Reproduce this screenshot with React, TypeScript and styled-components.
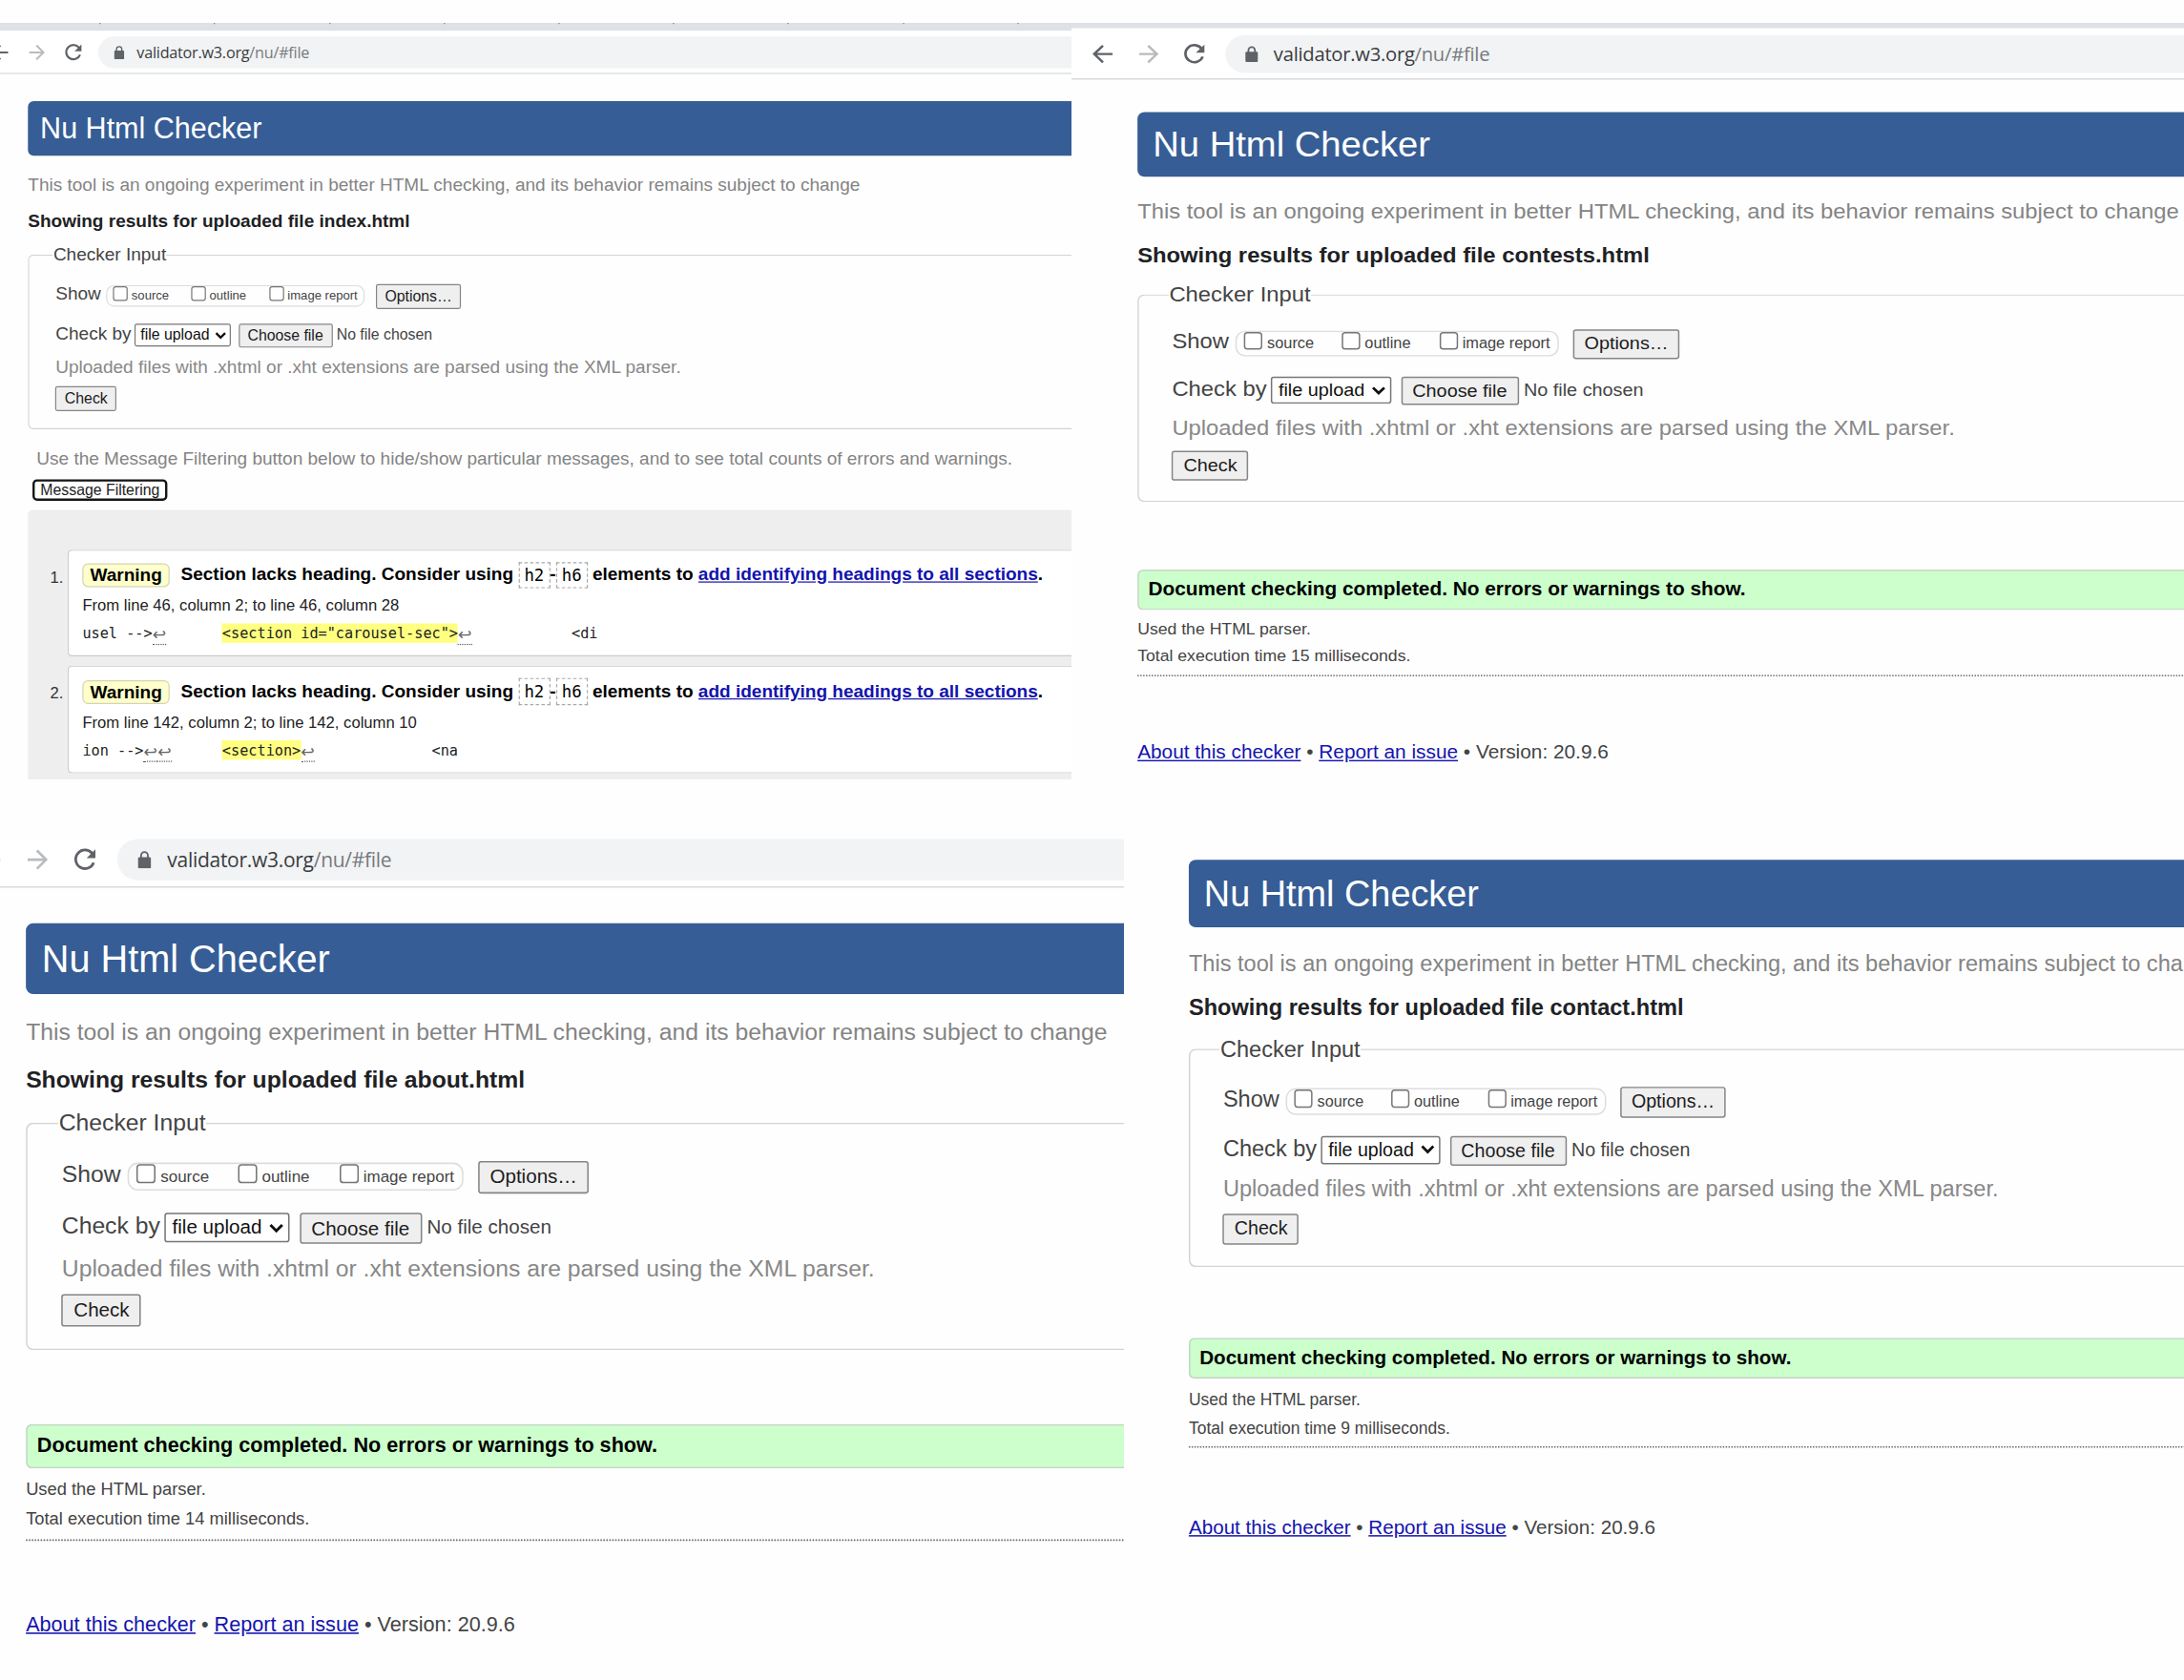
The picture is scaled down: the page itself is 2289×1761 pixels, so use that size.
import React from 'react';
import styled, { createGlobalStyle } from 'styled-components';

const sans = `'Liberation Sans', Arial, sans-serif`;
const mono = `'DejaVu Sans Mono', 'Liberation Mono', monospace`;

const GlobalStyle = createGlobalStyle`
  *, *::before, *::after { box-sizing: border-box; }
  body { margin: 0; background: #fff; font-family: ${sans}; color: #333; }
  p, h1, h2, ol { margin: 0; }
`;

const Page = styled.main`
  display: flex;
  flex-direction: column;
  width: 2289px;
  height: 1761px;
  padding-top: 24px;
  overflow: hidden;
  background: #fefefe;
`;

const PaneRow = styled.div<{ $height: number; $gap?: number }>`
  display: flex;
  flex: none;
  height: ${(p) => p.$height}px;
  margin-bottom: ${(p) => p.$gap ?? 0}px;
`;

const Pane = styled.section<{ $width: number }>`
  flex: none;
  width: ${(p) => p.$width}px;
  height: 100%;
  overflow: hidden;
`;

const Stage = styled.div<{ $x: number; $y: number; $sx: number; $sy: number }>`
  width: 960px;
  transform-origin: 0 0;
  transform: translate(${(p) => p.$x}px, ${(p) => p.$y}px) scale(${(p) => p.$sx}, ${(p) => p.$sy});
  font-size: 16px;
  line-height: 20px;
  white-space: nowrap;
`;

const TabStrip = styled.div`
  display: flex;
  gap: 100.2px;
  height: 7px;
  margin-left: -12px;
  padding-left: 110.2px;
  background: #dee1e6;
`;

const TabMark = styled.span`
  width: 1px;
  height: 1px;
  background: #777b80;
`;

const Toolbar = styled.div`
  display: flex;
  align-items: flex-start;
  height: 38px;
  margin-left: -12px;
  padding: 4.7px 0 0 14px;
  border-bottom: 1px solid #d6d8da;
  background: #fff;
`;

const NavIcon = styled.svg<{ $gap: number }>`
  flex: none;
  display: block;
  width: 16px;
  height: 16px;
  margin: 6.5px ${(p) => p.$gap}px 0 0;
`;

const AddressBar = styled.div`
  display: flex;
  flex: 1;
  height: 28px;
  padding-left: 13.6px;
  border-radius: 14px 0 0 14px;
  background: #f1f3f4;
`;

const LockIcon = styled.svg`
  flex: none;
  width: 9px;
  height: 12px;
  margin: 8.2px 11.4px 0 0;
`;

const Url = styled.span`
  color: #3a3c3f;
  font: 13.6px/28.6px 'Open Sans', 'Noto Sans', sans-serif;
  letter-spacing: -0.18px;
`;

const UrlPath = styled.span`
  color: #777a7e;
`;

const Content = styled.div<{ $top: number }>`
  padding: ${(p) => p.$top}px 0 0 35px;
`;

const Banner = styled.h1`
  height: 48px;
  padding-left: 10.8px;
  border-radius: 5px 0 0 5px;
  background: #365d95;
  color: #fff;
  font-size: 25.7px;
  font-weight: 400;
  line-height: 48.6px;
`;

const Intro = styled.p`
  margin-top: 16.1px;
  color: #848484;
`;

const ResultTitle = styled.h2`
  margin-top: 11.6px;
  color: #202124;
  font-size: 16px;
  line-height: 20px;
`;

const Fieldset = styled.fieldset`
  margin: 9.5px 0 0;
  padding: 0 0 14.7px 21.4px;
  border: 1px solid #d3d3d3;
  border-right: 0;
  border-radius: 5px 0 0 5px;
`;

const Legend = styled.legend`
  padding: 0;
  color: #444;
`;

const FormBody = styled.div`
  padding: 15.7px 0 0 2px;
`;

const FormRow = styled.div`
  display: flex;
  align-items: flex-start;
  color: #444;
`;

const ShowLabel = styled.span`
  width: 44.8px;
  margin-top: -0.4px;
`;

const CheckByLabel = styled.span`
  width: 69.8px;
  margin-top: -0.4px;
`;

const OptionPill = styled.div`
  display: flex;
  width: 228.3px;
  height: 19px;
  margin: 1.5px 9.4px 0 0;
  padding-left: 5px;
  border: 1px solid #ddd;
  border-radius: 7px;
`;

const OptionItem = styled.label<{ $width: number }>`
  display: flex;
  gap: 3.2px;
  width: ${(p) => p.$width}px;
  font-size: 11px;
  line-height: 17.4px;
`;

const CheckBox = styled.input.attrs({ type: 'checkbox' })`
  appearance: none;
  flex: none;
  width: 13px;
  height: 13px;
  margin: -0.2px 0 0;
  border: 1px solid #767676;
  border-radius: 2.5px;
  background: #fff;
`;

const Button = styled.button<{ $height?: number }>`
  display: block;
  height: ${(p) => p.$height ?? 22}px;
  margin: 0;
  padding: 0 7.1px 1px;
  border: 1px solid #858585;
  border-radius: 2px;
  background: #efefef;
  color: #1c1c1c;
  font: 13.333px/19px ${sans};
`;

const UploadRow = styled(FormRow)`
  margin-top: 13px;
`;

const SelectBox = styled.div`
  display: flex;
  align-items: center;
  gap: 4.5px;
  width: 84.4px;
  height: 19.4px;
  margin: 0.6px 7.1px 0 0;
  padding-left: 4.2px;
  border: 1px solid #767676;
  border-radius: 2px;
  background: #fff;
  color: #111;
  font-size: 13.333px;
`;

const Chevron = styled.svg`
  flex: none;
  width: 10px;
  height: 7px;
`;

const FileName = styled.span`
  margin: 0.4px 0 0 3.7px;
  font-size: 13.333px;
`;

const UploadHint = styled.p`
  margin: 7.2px 0 7.3px;
  color: #888;
`;

const FilterHint = styled.p`
  margin: 15.7px 0 7.8px 7.6px;
  color: #848484;
`;

const FilterButton = styled.button`
  display: block;
  height: 19.4px;
  margin: 0 0 8.4px 4px;
  padding: 0 5px;
  border: 2px solid #151515;
  border-radius: 4px;
  background: #fff;
  color: #1c1c1c;
  font: 13.333px/15px ${sans};
`;

const Results = styled.ol`
  display: flex;
  flex-direction: column;
  gap: 8.4px;
  padding: 34.2px 0 20px;
  list-style: none;
  border-radius: 4px 0 0 0;
  background: #eee;
`;

const ResultRow = styled.li`
  display: flex;
`;

const ResultNumber = styled.span`
  width: 35px;
  padding: 14px 3.8px 0 0;
  font-size: 14px;
  text-align: right;
`;

const Card = styled.div`
  flex: 1;
  height: 94.4px;
  padding: 11.6px 0 0 12.1px;
  border: 1px solid #ccc;
  border-right: 0;
  border-radius: 4px 0 0 4px;
  background: #fff;
`;

const CardTitle = styled.div`
  display: flex;
  align-items: flex-start;
  height: 24px;
  color: #000;
  font-weight: 700;
`;

const Badge = styled.span`
  height: 21.4px;
  margin-right: 9.8px;
  padding: 0 5.8px;
  border: 1px solid #d4d4b4;
  border-radius: 5px;
  background: #ffc;
`;

const TitleText = styled.span`
  margin-top: -0.3px;
  white-space: pre;
`;

const Tag = styled.code`
  height: 23.6px;
  margin-top: -1.6px;
  padding: 0 4.1px;
  border: 1px dashed #aaa;
  font: 400 14.6px/22.4px ${mono};
`;

const Link = styled.a`
  color: #1313ae;
  text-decoration: underline;
`;

const Location = styled.div`
  margin-top: 3px;
  color: #222;
  font-size: 14px;
`;

const Extract = styled.pre`
  margin: 5.1px 0 0;
  color: #222;
  font: 12.8px/20px ${mono};
  tab-size: 8;
`;

const Mark = styled.mark`
  padding: 1px 0;
  background: #ffff80;
  color: #222;
`;

const LineEnd = styled.span`
  display: inline-block;
  width: 12.4px;
  height: 16.4px;
  border-bottom: 1px dotted #555;
  color: #666;
  font: 14.5px/14px 'DejaVu Sans', sans-serif;
  vertical-align: -1.8px;
`;

const Success = styled.div`
  height: 29.4px;
  margin-top: 50.3px;
  padding-left: 6.6px;
  border: 1px solid #c3d3c3;
  border-right: 0;
  border-radius: 4px 0 0 4px;
  background: #cfc;
  color: #000;
  font-size: 14px;
  font-weight: 700;
  line-height: 27px;
`;

const Stats = styled.div`
  margin-top: 4.5px;
  padding-bottom: 3.4px;
  border-bottom: 1px dotted #666;
  color: #444;
  font-size: 11.87px;
`;

const Footer = styled.footer`
  margin-top: 46px;
  color: #444;
  font-size: 14px;
`;

const Chrome = ({ marks }: { marks?: boolean }) => (
  <>
    <TabStrip>{marks && Array.from({ length: 9 }, (_, i) => <TabMark key={i} />)}</TabStrip>
    <Toolbar>
      <NavIcon $gap={17} viewBox="0 0 16 16" fill="none" stroke="#5f6368" strokeWidth="1.7">
        <path d="M15.5 8H2.8M8.7 1.8 2.5 8l6.2 6.2" />
      </NavIcon>
      <NavIcon $gap={16} viewBox="0 0 16 16" fill="none" stroke="#b9bbbe" strokeWidth="1.7">
        <path d="M1.2 8H13.5M7.5 1.8 13.7 8 7.5 14.2" />
      </NavIcon>
      <NavIcon $gap={14} viewBox="0 0 16 16" fill="none" stroke="#5f6368" strokeWidth="1.8">
        <path d="M13.3 4.2A6.3 6.3 0 1 0 14 10" />
        <path d="M15.2 1v6H9.2z" fill="#5f6368" stroke="none" />
      </NavIcon>
      <AddressBar>
        <LockIcon viewBox="0 0 9 12">
          <path d="M2.2 5V3.2a2.3 2.3 0 0 1 4.6 0V5" fill="none" stroke="#5f6368" strokeWidth="1.2" />
          <rect x="0" y="4.3" width="9" height="7.7" rx="1" fill="#5f6368" />
        </LockIcon>
        <Url>
          validator.w3.org<UrlPath>/nu/#file</UrlPath>
        </Url>
      </AddressBar>
    </Toolbar>
  </>
);

const CheckerForm = ({ file }: { file: string }) => (
  <>
    <Banner>Nu Html Checker</Banner>
    <Intro>This tool is an ongoing experiment in better HTML checking, and its behavior remains subject to change</Intro>
    <ResultTitle>Showing results for uploaded file {file}</ResultTitle>
    <Fieldset>
      <Legend>Checker Input</Legend>
      <FormBody>
        <FormRow>
          <ShowLabel>Show</ShowLabel>
          <OptionPill>
            <OptionItem $width={69.1}><CheckBox />source</OptionItem>
            <OptionItem $width={69.1}><CheckBox />outline</OptionItem>
            <OptionItem $width={84}><CheckBox />image report</OptionItem>
          </OptionPill>
          <Button>Options…</Button>
        </FormRow>
        <UploadRow>
          <CheckByLabel>Check by</CheckByLabel>
          <SelectBox>
            file upload
            <Chevron viewBox="0 0 10 7" fill="none" stroke="#111" strokeWidth="1.9">
              <path d="M1 1.2 5 5.2 9 1.2" />
            </Chevron>
          </SelectBox>
          <Button $height={21}>Choose file</Button>
          <FileName>No file chosen</FileName>
        </UploadRow>
        <UploadHint>Uploaded files with .xhtml or .xht extensions are parsed using the XML parser.</UploadHint>
        <Button>Check</Button>
      </FormBody>
    </Fieldset>
  </>
);

const Completed = ({ time }: { time: number }) => (
  <>
    <Success>Document checking completed. No errors or warnings to show.</Success>
    <Stats>
      <p>Used the HTML parser.</p>
      <p>Total execution time {time} milliseconds.</p>
    </Stats>
    <Footer>
      <Link>About this checker</Link> • <Link>Report an issue</Link> • Version: 20.9.6
    </Footer>
  </>
);

const Warning = ({ index, location, children }: { index: number; location: string; children: React.ReactNode }) => (
  <ResultRow>
    <ResultNumber>{index}.</ResultNumber>
    <Card>
      <CardTitle>
        <Badge>Warning</Badge>
        <TitleText>{'Section lacks heading. Consider using '}</TitleText>
        <Tag>h2</Tag>
        <TitleText>-</TitleText>
        <Tag>h6</Tag>
        <TitleText>
          {' elements to '}
          <Link>add identifying headings to all sections</Link>.
        </TitleText>
      </CardTitle>
      <Location>{location}</Location>
      <Extract>{children}</Extract>
    </Card>
  </ResultRow>
);

export default function App() {
  return (
    <Page>
      <GlobalStyle />
      <PaneRow $height={793} $gap={62}>
        <Pane $width={1123}>
          <Stage $x={-12.3} $y={0} $sx={1.188} $sy={1.19}>
            <Chrome marks />
            <Content $top={24}>
              <CheckerForm file="index.html" />
              <FilterHint>
                Use the Message Filtering button below to hide/show particular messages, and to see total counts of errors and warnings.
              </FilterHint>
              <FilterButton>Message Filtering</FilterButton>
              <Results>
                <Warning index={1} location="From line 46, column 2; to line 46, column 28">
                  {'usel -->'}<LineEnd>↩</LineEnd>{'\t'}<Mark>{'<section id="carousel-sec">'}</Mark><LineEnd>↩</LineEnd>{'\t\t<di'}
                </Warning>
                <Warning index={2} location="From line 142, column 2; to line 142, column 10">
                  {'ion -->'}<LineEnd>↩</LineEnd><LineEnd>↩</LineEnd>{'\t'}<Mark>{'<section>'}</Mark><LineEnd>↩</LineEnd>{'\t\t<na'}
                </Warning>
              </Results>
            </Content>
          </Stage>
        </Pane>
        <Pane $width={1166}>
          <Stage $x={17.1} $y={-4.2} $sx={1.487} $sy={1.415}>
            <Chrome />
            <Content $top={24}>
              <CheckerForm file="contests.html" />
              <Completed time={15} />
            </Content>
          </Stage>
        </Pane>
      </PaneRow>
      <PaneRow $height={882}>
        <Pane $width={1178}>
          <Stage $x={-26.9} $y={-18.2} $sx={1.544} $sy={1.549}>
            <Chrome />
            <Content $top={24}>
              <CheckerForm file="about.html" />
              <Completed time={14} />
            </Content>
          </Stage>
        </Pane>
        <Pane $width={1111}>
          <Stage $x={16.4} $y={0} $sx={1.473} $sy={1.478}>
            <Content $top={14.7}>
              <CheckerForm file="contact.html" />
              <Completed time={9} />
            </Content>
          </Stage>
        </Pane>
      </PaneRow>
    </Page>
  );
}
